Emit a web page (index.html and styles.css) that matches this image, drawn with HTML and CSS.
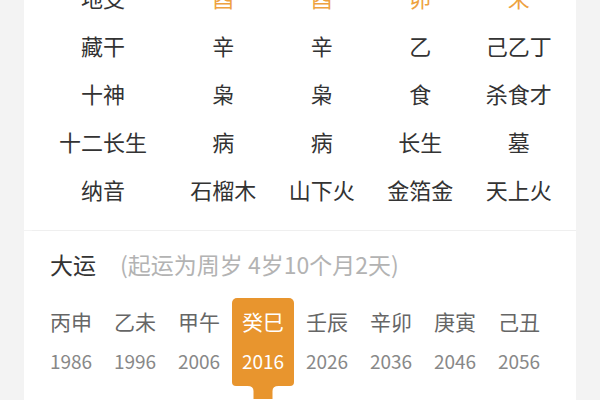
FILE: index.html
```html
<!DOCTYPE html>
<html lang="zh">
<head>
<meta charset="utf-8">
<link rel="stylesheet" href="styles.css">
</head>
<body>
<div class="page">
  <section class="card pillars">
    <div class="row"><span class="label">地支</span><span class="hl">酉</span><span class="hl">酉</span><span class="hl">卯</span><span class="hl">未</span></div>
    <div class="row"><span class="label">藏干</span><span>辛</span><span>辛</span><span>乙</span><span>己乙丁</span></div>
    <div class="row"><span class="label">十神</span><span>枭</span><span>枭</span><span>食</span><span>杀食才</span></div>
    <div class="row"><span class="label">十二长生</span><span>病</span><span>病</span><span>长生</span><span>墓</span></div>
    <div class="row"><span class="label">纳音</span><span>石榴木</span><span>山下火</span><span>金箔金</span><span>天上火</span></div>
  </section>
  <div class="divider"></div>
  <section class="card dayun">
    <div class="head"><span class="title">大运</span><span class="note">(起运为周岁 4岁10个月2天)</span></div>
    <div class="list">
      <div class="item"><span class="gz">丙申</span><span class="yr">1986</span></div>
      <div class="item"><span class="gz">乙未</span><span class="yr">1996</span></div>
      <div class="item"><span class="gz">甲午</span><span class="yr">2006</span></div>
      <div class="item active"><span class="gz">癸巳</span><span class="yr">2016</span>
        <svg class="tail" width="31" height="13" viewBox="0 0 31 13"><path d="M0 0 H31 Q25 0 25 5 V13 H6 V5 Q6 0 0 0 Z" fill="#e8952e"/></svg>
      </div>
      <div class="item"><span class="gz">壬辰</span><span class="yr">2026</span></div>
      <div class="item"><span class="gz">辛卯</span><span class="yr">2036</span></div>
      <div class="item"><span class="gz">庚寅</span><span class="yr">2046</span></div>
      <div class="item"><span class="gz">己丑</span><span class="yr">2056</span></div>
    </div>
  </section>
</div>
</body>
</html>
```

FILE: styles.css
```css
html, body {
  margin: 0;
  padding: 0;
}
body {
  background: #f3f3f3;
  font-family: "Noto Sans CJK SC", "Noto Sans", sans-serif;
  width: 600px;
  height: 400px;
  overflow: hidden;
}
.page {
  width: 552px;
  margin: 0 auto;
}
.card {
  background: #fff;
}
.pillars {
  margin-top: -27px;
  padding: 0 8px 17px;
}
.row {
  display: grid;
  grid-template-columns: 142px repeat(4, 1fr);
  height: 48px;
  align-items: center;
  font-size: 22px;
  color: #333;
  text-align: center;
}
.row span {
  line-height: 48px;
}
.row .hl {
  color: #eea23f;
}
.divider {
  height: 1px;
  background: #efefef;
  margin-left: 8px;
}
.dayun {
  box-sizing: border-box;
  padding: 16px 0 0 16px;
  height: 169px;
}
.head {
  display: flex;
  align-items: center;
  height: 34px;
  padding-left: 10px;
}
.title {
  font-size: 23px;
  color: #333;
}
.note {
  font-size: 23px;
  color: #b3b3b3;
  margin-left: 24px;
}
.list {
  display: flex;
  gap: 2px;
  margin-top: 17px;
}
.item {
  position: relative;
  width: 62px;
  height: 88px;
  box-sizing: border-box;
  padding-top: 7px;
  display: flex;
  flex-direction: column;
  align-items: center;
  border-radius: 5px 5px 4px 4px;
}
.gz {
  font-size: 21px;
  line-height: 32px;
  color: #666;
}
.yr {
  font-size: 19px;
  line-height: 26px;
  margin-top: 11px;
  color: #888;
}
.item.active {
  background: #e8952e;
}
.item.active .gz,
.item.active .yr {
  color: #fff;
}
.tail {
  position: absolute;
  left: 50%;
  top: 88px;
  transform: translateX(-50%);
  display: block;
}
```
